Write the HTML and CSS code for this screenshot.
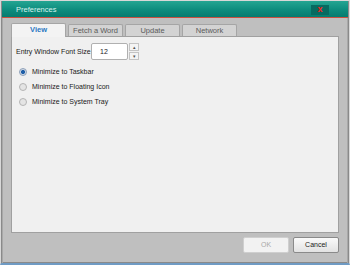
FILE: index.html
```html
<!DOCTYPE html>
<html lang="en">
<head>
    <meta charset="UTF-8">
    <title>Preferences</title>
    <link rel="stylesheet" href="styles.css">
</head>
<body>

<div class="window">
    <div class="titlebar">
        <div class="title">Preferences</div>
        <div class="close">x</div>
    </div>

    <div class="body">
        <div class="tabs">
            <div class="tab active">View</div>
            <div class="tab">Fetch a Word</div>
            <div class="tab">Update</div>
            <div class="tab">Network</div>
        </div>

        <div class="panel">
            <div class="font-row">
                <span class="label">Entry Window Font Size</span>
                <div class="spinner">
                    <div class="spin-value">12</div>
                    <div class="spin-btns">
                        <div class="spin-btn">&#9652;</div>
                        <div class="spin-btn">&#9662;</div>
                    </div>
                </div>
            </div>

            <div class="radio-row">
                <span class="radio checked"></span>
                <span>Minimize to Taskbar</span>
            </div>
            <div class="radio-row">
                <span class="radio"></span>
                <span>Minimize to Floating Icon</span>
            </div>
            <div class="radio-row">
                <span class="radio"></span>
                <span>Minimize to System Tray</span>
            </div>
        </div>

        <div class="buttons">
            <div class="btn disabled">OK</div>
            <div class="btn">Cancel</div>
        </div>
    </div>
</div>

</body>
</html>
```

FILE: styles.css
```css
body {
    margin: 0;
    padding: 0;
    font-family: "Liberation Sans", Arial, sans-serif;
    font-size: 7px;
    background: #fff;
}
.window {
    width: 350px;
    height: 265px;
    box-sizing: border-box;
    display: flex;
    flex-direction: column;
    background: #bfbfbf;
    border: 1px solid #d8d8d8;
    border-bottom: 2px solid #6f9bc4;
    box-shadow: inset 1px 0 0 #8a8a8a, inset -1px 0 0 #8a8a8a, inset 0 -1px 0 #8a8a8a;
}
.titlebar {
    height: 16px;
    margin: 0 1px;
    display: flex;
    align-items: center;
    justify-content: space-between;
    background: linear-gradient(#24a592, #0b8a7c 60%, #067a6e);
    border-bottom: 1px solid #c8503f;
}
.title {
    color: #d9f3ee;
    margin-left: 14px;
    font-size: 7.5px;
}
.close {
    width: 18px;
    height: 10px;
    margin-right: 19px;
    margin-top: 2px;
    background: #076a60;
    color: #ff1a1a;
    font-weight: bold;
    font-size: 9px;
    text-align: center;
    line-height: 9px;
}
.body {
    flex: 1;
    display: flex;
    flex-direction: column;
    padding: 5px 8px 0 8px;
    border-left: 1px solid #a8a8a8;
    border-right: 1px solid #a8a8a8;
    margin: 0 1px;
}
.tabs {
    display: flex;
    height: 13px;
}
.tab {
    width: 55px;
    height: 12px;
    margin-top: 1px;
    margin-right: 2px;
    box-sizing: border-box;
    background: #d3d3d3;
    border: 1px solid #a5a5a5;
    border-bottom: none;
    border-radius: 2px 2px 0 0;
    color: #5b5b5b;
    text-align: center;
    line-height: 11px;
    font-size: 7.5px;
    white-space: nowrap;
}
.tab.active {
    height: 14px;
    margin-top: 0;
    margin-bottom: -1px;
    background: #f3f3f3;
    color: #2a78c2;
    font-weight: bold;
    line-height: 12px;
    position: relative;
}
.panel {
    height: 197px;
    box-sizing: border-box;
    background: #f0f0f0;
    border: 1px solid #a0a0a0;
    padding: 6px 4px;
    color: #1a1a1a;
}
.font-row {
    display: flex;
    align-items: center;
    height: 17px;
    margin-bottom: 4px;
}
.label {
    width: 75px;
    white-space: nowrap;
}
.spinner {
    display: flex;
    gap: 1px;
}
.spin-value {
    width: 37px;
    height: 17px;
    box-sizing: border-box;
    border: 1px solid #b0b0b0;
    border-radius: 2px;
    background: #fff;
    padding-left: 8px;
    line-height: 15px;
}
.spin-btns {
    display: flex;
    flex-direction: column;
    gap: 1px;
}
.spin-btn {
    width: 10px;
    height: 8px;
    box-sizing: border-box;
    border: 1px solid #c4c4c4;
    background: #f4f4f4;
    color: #555;
    font-size: 5px;
    line-height: 6px;
    text-align: center;
}
.radio-row {
    display: flex;
    align-items: center;
    height: 15px;
    padding-left: 3px;
}
.radio {
    width: 6px;
    height: 6px;
    border-radius: 50%;
    border: 1px solid #b4b4b4;
    background: #e4e4e4;
    margin-right: 5px;
}
.radio.checked {
    background: radial-gradient(circle, #1f5fa8 0 1.8px, #cfd9e6 2.3px);
    border-color: #8c9fb8;
}
.buttons {
    display: flex;
    justify-content: flex-end;
    gap: 4px;
    padding-top: 4px;
}
.btn {
    width: 46px;
    height: 16px;
    box-sizing: border-box;
    border: 1px solid #8a8a8a;
    border-radius: 2px;
    background: linear-gradient(#fafafa, #e2e2e2);
    text-align: center;
    line-height: 14px;
    color: #222;
}
.btn.disabled {
    border-color: #cfcfcf;
    background: #f2f2f2;
    color: #a8a8a8;
}
```
